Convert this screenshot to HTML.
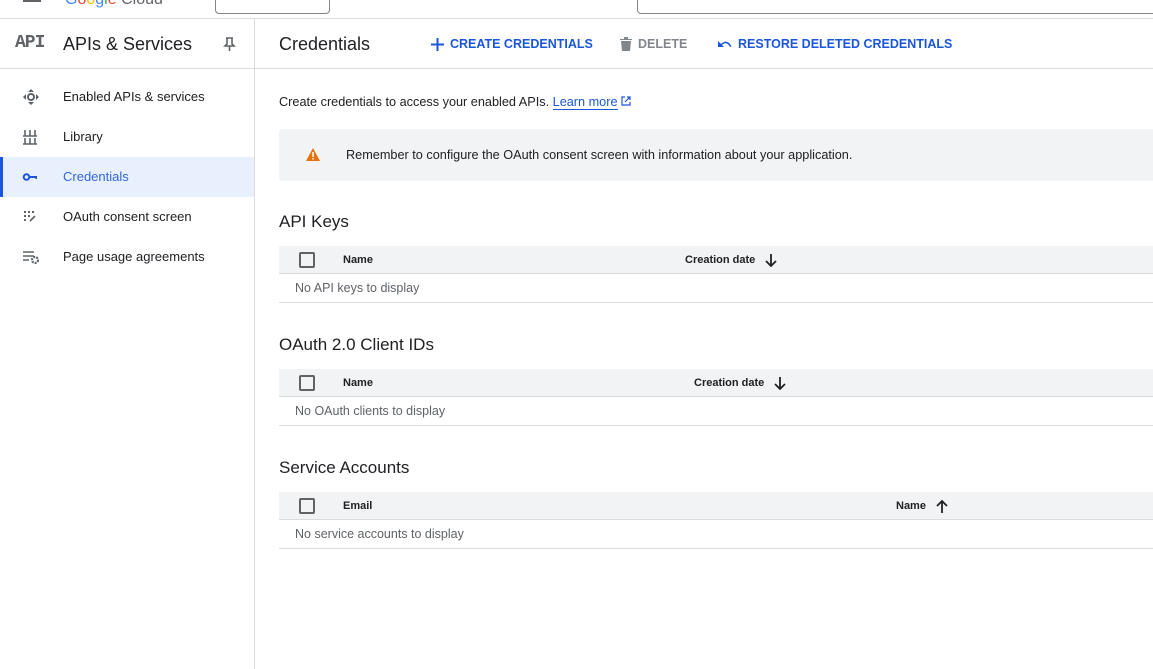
<!DOCTYPE html>
<html><head><meta charset="utf-8"><style>
*{box-sizing:border-box;margin:0;padding:0}
body{width:1153px;height:669px;overflow:hidden;background:#fff;font-family:"Liberation Sans",Arial,sans-serif;color:#202124;position:relative}
.abs{position:absolute}
.top{left:0;top:0;width:1153px;height:19px;border-bottom:1px solid #dadce0}
.side{left:0;top:19px;width:255px;height:650px;border-right:1px solid #dadce0}
.nav{position:absolute;left:0;width:254px;height:40px;font-size:13px;line-height:40px;padding-left:63px;color:#202124}
.nav.act{background:#e8f0fe;color:#3367d6}
.nav.act:before{content:"";position:absolute;left:0;top:0;width:3px;height:40px;background:#1a56db}
.nav svg{position:absolute;left:22px;top:12px}
.btn{position:absolute;top:37px;height:14px;line-height:14px;font-size:12.5px;font-weight:bold;color:#1a56db;display:flex;align-items:center;gap:6px}
.tbl{position:absolute;left:279px;width:874px}
.th{height:28px;background:#f1f3f4;border-bottom:1px solid #dadce0;position:relative;font-size:11px;font-weight:bold}
.th span{position:absolute;top:0;height:28px;line-height:28px;display:flex;align-items:center;gap:10px}
.cb{position:absolute;left:20px;top:6px;width:16px;height:16px;border:2px solid #5f6368;border-radius:2px}
.tr{height:29px;border-bottom:1px solid #dadce0;font-size:12.5px;color:#5f6368;padding-left:16px;line-height:28px}
h2{position:absolute;left:279px;font-size:17px;font-weight:normal}
</style></head><body>
<div class="abs top">
 <div class="abs" style="left:23px;top:0;width:18px;height:2px;background:#5f6368"></div>
 <div class="abs" style="left:65px;top:-9px;font-size:16px;color:#5f6368"><span style="color:#4285f4">G</span><span style="color:#ea4335">o</span><span style="color:#fbbc04">o</span><span style="color:#4285f4">g</span><span style="color:#34a853">l</span><span style="color:#ea4335">e</span> Cloud</div>
 <div class="abs" style="left:215px;top:-10px;width:115px;height:24px;border:1px solid #80868b;border-radius:4px"></div>
 <div class="abs" style="left:637px;top:-10px;width:530px;height:24px;border:1px solid #80868b;border-radius:4px"></div>
</div>
<div class="abs side">
 <div class="abs" style="left:0;top:0;width:254px;height:50px;border-bottom:1px solid #dadce0">
  <div class="abs" style="left:15px;top:14px;font-family:'Liberation Mono',monospace;font-weight:bold;font-size:18px;color:#5f6368;letter-spacing:-1px">API</div>
  <div class="abs" style="left:63px;top:15px;font-size:18px">APIs &amp; Services</div>
  <svg class="abs" style="left:223px;top:18px" width="13" height="15" viewBox="0 0 13 15"><path d="M3 1h7M4 1v6l-2 2h9l-2-2V1M6.5 9v5" fill="none" stroke="#5f6368" stroke-width="1.6"/></svg>
 </div>
 <div class="nav" style="top:58px"><svg width="18" height="16" viewBox="0 0 18 16"><path d="M9 0l3 3H6zM9 16l3-3H6zM1 8l3-3v6zM17 8l-3-3v6z" fill="#5f6368"/><circle cx="9" cy="8" r="3" fill="none" stroke="#5f6368" stroke-width="2"/></svg>Enabled APIs &amp; services</div>
 <div class="nav" style="top:98px"><svg width="16" height="16" viewBox="0 0 16 16"><path d="M1 7h14M1 15h14M3 1v6M8 1v6M13 1v6M3 9v6M8 9v6M13 9v6" stroke="#5f6368" stroke-width="1.6"/></svg>Library</div>
 <div class="nav act" style="top:138px"><svg width="16" height="16" viewBox="0 0 16 16"><circle cx="4.5" cy="8" r="2.8" fill="none" stroke="#1a56db" stroke-width="2"/><path d="M7 7h8v3h-1.5V9H7z" fill="#1a56db"/></svg>Credentials</div>
 <div class="nav" style="top:178px"><svg width="16" height="16" viewBox="0 0 16 16"><g fill="#5f6368"><rect x="2" y="2" width="2" height="2"/><rect x="6" y="2" width="2" height="2"/><rect x="10" y="2" width="2" height="2"/><rect x="2" y="6" width="2" height="2"/><rect x="6" y="6" width="2" height="2"/><rect x="2" y="10" width="2" height="2"/></g><path d="M8 12l5-5" stroke="#5f6368" stroke-width="1.6"/></svg>OAuth consent screen</div>
 <div class="nav" style="top:218px"><svg width="18" height="16" viewBox="0 0 18 16"><path d="M1 3h11M1 7h11M1 11h6" stroke="#5f6368" stroke-width="1.6"/><circle cx="13" cy="11" r="3" fill="none" stroke="#5f6368" stroke-width="2.2" stroke-dasharray="2 1"/></svg>Page usage agreements</div>
</div>
<div class="abs" style="left:255px;top:68px;width:898px;height:1px;background:#dadce0"></div>
<div class="abs" style="left:279px;top:34px;font-size:18px">Credentials</div>
<div class="btn" style="left:431px"><svg width="13" height="13" viewBox="0 0 13 13"><path d="M6.5 0v13M0 6.5h13" stroke="#1a56db" stroke-width="2"/></svg>CREATE CREDENTIALS</div>
<div class="btn" style="left:620px;color:#80868b"><svg width="12" height="14" viewBox="0 0 12 14"><path d="M0 2h12v1H0zM4 0h4v2H4zM1 4h10l-1 10H2z" fill="#80868b"/></svg>DELETE</div>
<div class="btn" style="left:717px"><svg width="15" height="10" viewBox="0 0 15 10"><path d="M1 2v6h6L5 6c3-3 6-2 8 2l1.5-.5C12 2 8 1 4 5z" fill="#1a56db"/></svg>RESTORE DELETED CREDENTIALS</div>
<div class="abs" style="left:279px;top:95px;font-size:12.7px">Create credentials to access your enabled APIs. <span style="color:#1a56db;border-bottom:1px solid #1a56db">Learn more</span> <svg width="10" height="10" viewBox="0 0 10 10"><path d="M4 1H1v8h8V6M6 1h3v3M9 1L4 6" fill="none" stroke="#1a56db" stroke-width="1.2"/></svg></div>
<div class="abs" style="left:279px;top:129px;width:874px;height:52px;background:#f1f3f4;border-radius:4px 0 0 4px">
 <svg class="abs" style="left:27px;top:19px" width="14" height="13" viewBox="0 0 14 13"><path d="M7 0l7 13H0z" fill="#e8710a"/><path d="M7 4v5M7 10v1.5" stroke="#fff" stroke-width="1.5"/></svg>
 <div class="abs" style="left:67px;top:19px;font-size:12.7px">Remember to configure the OAuth consent screen with information about your application.</div>
</div>
<h2 style="top:212px">API Keys</h2>
<div class="tbl" style="top:246px"><div class="th"><div class="cb"></div><span style="left:64px">Name</span><span style="left:406px">Creation date<svg width="12" height="13" viewBox="0 0 12 13"><path d="M6 0v12M1 7l5 5 5-5" fill="none" stroke="#202124" stroke-width="1.8"/></svg></span></div><div class="tr">No API keys to display</div></div>
<h2 style="top:335px">OAuth 2.0 Client IDs</h2>
<div class="tbl" style="top:369px"><div class="th"><div class="cb"></div><span style="left:64px">Name</span><span style="left:415px">Creation date<svg width="12" height="13" viewBox="0 0 12 13"><path d="M6 0v12M1 7l5 5 5-5" fill="none" stroke="#202124" stroke-width="1.8"/></svg></span></div><div class="tr">No OAuth clients to display</div></div>
<h2 style="top:458px">Service Accounts</h2>
<div class="tbl" style="top:492px"><div class="th"><div class="cb"></div><span style="left:64px">Email</span><span style="left:617px">Name<svg width="12" height="13" viewBox="0 0 12 13"><path d="M6 13V1M1 6l5-5 5 5" fill="none" stroke="#202124" stroke-width="1.8"/></svg></span></div><div class="tr">No service accounts to display</div></div>
</body></html>
